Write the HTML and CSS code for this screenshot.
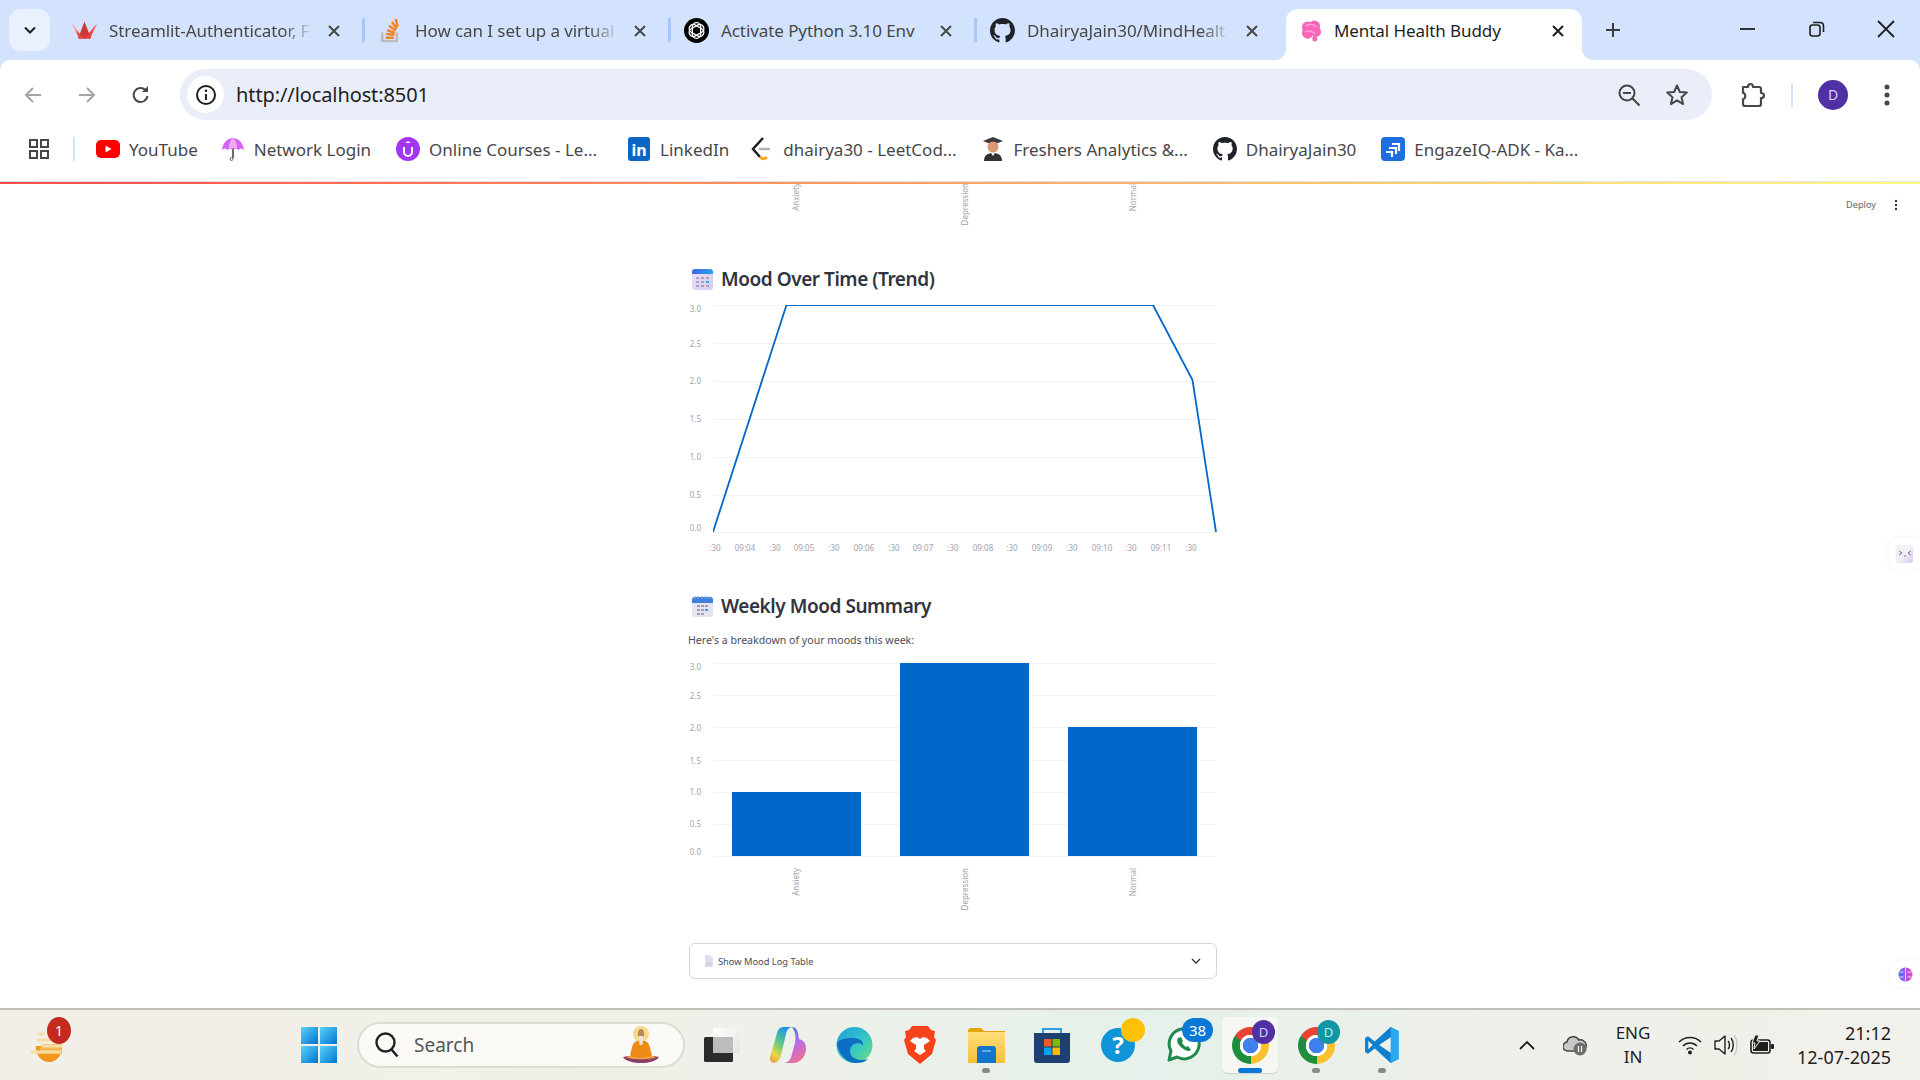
FILE: index.html
```html
<!DOCTYPE html>
<html lang="en">
<head>
  <meta charset="UTF-8">
  <title>Mental Health Buddy</title>
  <link rel="stylesheet" href="styles.css">
</head>
<body>
  <svg class="defs" width="0" height="0">
    <symbol id="github" viewBox="0 0 16 16"><path fill="#1f2328" d="M8 0C3.58 0 0 3.58 0 8c0 3.54 2.29 6.53 5.47 7.59.4.07.55-.17.55-.38 0-.19-.01-.82-.01-1.49-2.01.37-2.53-.49-2.69-.94-.09-.23-.48-.94-.82-1.13-.28-.15-.68-.52-.01-.53.63-.01 1.08.58 1.23.82.72 1.21 1.87.87 2.33.66.07-.52.28-.87.51-1.07-1.78-.2-3.64-.89-3.64-3.95 0-.87.31-1.59.82-2.15-.08-.2-.36-1.02.08-2.12 0 0 .67-.21 2.2.82.64-.18 1.32-.27 2-.27.68 0 1.36.09 2 .27 1.53-1.04 2.2-.82 2.2-.82.44 1.1.16 1.92.08 2.12.51.56.82 1.27.82 2.15 0 3.07-1.87 3.75-3.65 3.95.29.25.54.73.54 1.48 0 1.07-.01 1.93-.01 2.2 0 .21.15.46.55.38A8.013 8.013 0 0016 8c0-4.42-3.58-8-8-8z"/></symbol>
    <symbol id="x" viewBox="0 0 16 16"><path d="M3 3l10 10M13 3L3 13" fill="none" stroke="currentColor" stroke-width="2"/></symbol>
    <linearGradient id="calTop" x1="0" y1="0" x2="1" y2="0"><stop offset="0" stop-color="#3f67dd"/><stop offset="1" stop-color="#2aa2f5"/></linearGradient>
    <linearGradient id="calBody" x1="0" y1="0" x2="1" y2="1"><stop offset="0" stop-color="#ece6f7"/><stop offset="1" stop-color="#d8c8ee"/></linearGradient>
    <linearGradient id="winBlue" x1="0" y1="0" x2="1" y2="1"><stop offset="0" stop-color="#5bd3fb"/><stop offset="1" stop-color="#0073cf"/></linearGradient>
    <linearGradient id="edgeFill" x1="0" y1="0" x2="1" y2="1"><stop offset="0" stop-color="#1f9fe0"/><stop offset=".55" stop-color="#34c6c4"/><stop offset="1" stop-color="#6fe07a"/></linearGradient>
    <linearGradient id="copilotLeft" x1="0.700" y1="0" x2="0.200" y2="1"><stop offset="0" stop-color="#1d8ff0"/><stop offset=".45" stop-color="#5cc88a"/><stop offset=".8" stop-color="#e8d83a"/><stop offset="1" stop-color="#f0a050"/></linearGradient>
    <linearGradient id="copilotRight" x1="0.300" y1="0" x2="0.700" y2="1"><stop offset="0" stop-color="#2f6fe8"/><stop offset=".45" stop-color="#b56de8"/><stop offset="1" stop-color="#f2708f"/></linearGradient>
    <linearGradient id="brainFill" x1="0" y1="0" x2="1" y2="0"><stop offset="0" stop-color="#3a7cf0"/><stop offset=".5" stop-color="#a24ff0"/><stop offset="1" stop-color="#ef4fa6"/></linearGradient>
    <linearGradient id="folderFill" x1="0" y1="0" x2="0" y2="1"><stop offset="0" stop-color="#ffdf7a"/><stop offset="1" stop-color="#f7bf37"/></linearGradient>
    <linearGradient id="taskPane" x1="0" y1="0" x2="1" y2="1"><stop offset="0" stop-color="#fff"/><stop offset="1" stop-color="#e4e3df"/></linearGradient>
  </svg>

  <div class="tabstrip">
    <button class="tab-search"><svg width="16" height="16" viewBox="0 0 16 16"><path d="M3 5.500l5 5 5-5" fill="none" stroke="#1f1f1f" stroke-width="2"/></svg></button>

    <div class="tab">
      <svg class="tab-icon" viewBox="0 0 25 18"><path fill="#ff8e8e" d="M0 2l7 15H12z"/><path fill="#ff4b4b" d="M25 2l-7 15H12z"/><path fill="#c93a3a" d="M12.500 0L6 17h13z"/><path fill="#e9413f" d="M4 9l3 8h11l3-8-8.500 8z"/></svg>
      <span class="tab-title fade">Streamlit-Authenticator, F</span>
      <svg class="tab-close"><use href="#x"/></svg>
    </div>
    <div class="tab">
      <svg class="tab-icon" viewBox="0 0 25 26"><path fill="none" stroke="#bcbbbb" stroke-width="2.500" d="M4 15v9h15v-9"/><path fill="none" stroke="#f48024" stroke-width="2.500" d="M7.500 20.500h8.500M8 16.500l8.500 1M9 12.500l8 3M11 8l7 5M14 4l5 7M18 1l2 8"/></svg>
      <span class="tab-title fade">How can I set up a virtual</span>
      <svg class="tab-close"><use href="#x"/></svg>
    </div>
    <div class="tab">
      <svg class="tab-icon" viewBox="0 0 24 24"><circle cx="12" cy="12" r="12" fill="#000"/><g fill="none" stroke="#fff" stroke-width="1.300"><rect x="8" y="4.500" width="8" height="15" rx="4"/><rect x="8" y="4.500" width="8" height="15" rx="4" transform="rotate(60 12 12)"/><rect x="8" y="4.500" width="8" height="15" rx="4" transform="rotate(120 12 12)"/></g></svg>
      <span class="tab-title">Activate Python 3.10 Env</span>
      <svg class="tab-close"><use href="#x"/></svg>
    </div>
    <div class="tab">
      <svg class="tab-icon"><use href="#github"/></svg>
      <span class="tab-title fade">DhairyaJain30/MindHealt</span>
      <svg class="tab-close"><use href="#x"/></svg>
    </div>
    <div class="tab tab-active">
      <svg class="tab-icon tab-icon-small" viewBox="0 0 22 24"><g fill="#f766b8"><circle cx="7" cy="8" r="6"/><circle cx="14" cy="7" r="6"/><circle cx="16" cy="13" r="5"/><circle cx="7" cy="14" r="6"/><rect x="12" y="17" width="5" height="6" rx="2"/></g><path d="M5 7c3-3 8-3 11 1M4 13c4-2 8-1 11 2" fill="none" stroke="#fda8da" stroke-width="1.500"/></svg>
      <span class="tab-title">Mental Health Buddy</span>
      <svg class="tab-close"><use href="#x"/></svg>
    </div>
    <svg class="new-tab" viewBox="0 0 16 16"><path d="M8 1v14M1 8h14" fill="none" stroke="#3c3c3c" stroke-width="2"/></svg>

    <div class="window-controls">
      <span class="win-btn"><svg width="16" height="16" viewBox="0 0 16 16"><path d="M0 8h15" stroke="#1f1f1f" stroke-width="1.800"/></svg></span>
      <span class="win-btn"><svg width="16" height="16" viewBox="0 0 16 16"><rect x="1" y="4" width="10" height="11" rx="2.500" fill="none" stroke="#1f1f1f" stroke-width="1.600"/><path d="M4 1.500h7c2 0 3.500 1.500 3.500 3.500v6" fill="none" stroke="#1f1f1f" stroke-width="1.600"/></svg></span>
      <span class="win-btn"><svg width="18" height="18" viewBox="0 0 18 18"><path d="M1 1l16 16M17 1L1 17" stroke="#1f1f1f" stroke-width="1.800"/></svg></span>
    </div>
  </div>

  <div class="toolbar">
    <span class="nav-btn"><svg width="20" height="20" viewBox="0 0 20 20"><path d="M18 10H3M10 3l-7 7 7 7" fill="none" stroke="#a4a4a4" stroke-width="2"/></svg></span>
    <span class="nav-btn"><svg width="20" height="20" viewBox="0 0 20 20"><path d="M2 10h15M10 3l7 7-7 7" fill="none" stroke="#a4a4a4" stroke-width="2"/></svg></span>
    <span class="nav-btn"><svg width="20" height="20" viewBox="0 0 20 20"><path d="M16.500 11a7 7 0 1 1-2-6" fill="none" stroke="#474747" stroke-width="2"/><path d="M17 1v6h-6z" fill="#474747"/></svg></span>
    <div class="omnibox">
      <span class="site-info"><svg width="22" height="22" viewBox="0 0 22 22"><circle cx="11" cy="11" r="9" fill="none" stroke="#1f1f1f" stroke-width="2"/><path d="M11 10v6" stroke="#1f1f1f" stroke-width="2"/><circle cx="11" cy="6.800" r="1.300" fill="#1f1f1f"/></svg></span>
      <span class="url">http://localhost:8501</span>
      <svg class="omni-icon omni-zoom" width="24" height="24" viewBox="0 0 24 24"><circle cx="10" cy="10" r="7.500" fill="none" stroke="#474747" stroke-width="2"/><path d="M6 10h8M15.500 15.500l7 7" stroke="#474747" stroke-width="2"/></svg>
      <svg class="omni-icon" width="24" height="24" viewBox="0 0 24 24"><path d="M12 2.500l2.800 6.500 7 .6-5.300 4.600 1.600 6.900-6.100-3.700-6.100 3.700 1.600-6.900L2.200 9.600l7-.6z" fill="none" stroke="#474747" stroke-width="2" stroke-linejoin="round"/></svg>
    </div>
    <svg class="ext-icon" width="24" height="26" viewBox="0 0 24 26"><path d="M2 5h5c0-4 5-4 5 0h6c1 0 2 1 2 2v4c4 0 4 5 0 5v6c0 1-1 2-2 2H4c-1 0-2-1-2-2v-5c3 0 3-6 0-6z" fill="none" stroke="#474747" stroke-width="2.200" stroke-linejoin="round"/></svg>
    <span class="toolbar-sep"></span>
    <span class="avatar">D</span>
    <svg class="menu-dots" width="6" height="24" viewBox="0 0 6 24"><g fill="#474747"><circle cx="3" cy="4" r="2.500"/><circle cx="3" cy="12" r="2.500"/><circle cx="3" cy="20" r="2.500"/></g></svg>
  </div>

  <div class="bookmarks">
    <svg class="apps" width="20" height="20" viewBox="0 0 20 20"><g fill="none" stroke="#474747" stroke-width="2"><rect x="1" y="1" width="7" height="7"/><rect x="12" y="1" width="7" height="7"/><rect x="1" y="12" width="7" height="7"/><rect x="12" y="12" width="7" height="7"/></g></svg>
    <span class="bm-sep"></span>
    <div class="bm bm-first">
      <svg class="bm-icon" viewBox="0 0 24 24"><rect y="3" width="24" height="18" rx="5" fill="#f00"/><path d="M9.500 8.500v7l6-3.500z" fill="#fff"/></svg>
      <span>YouTube</span>
    </div>
    <div class="bm bm-network">
      <svg class="bm-icon" viewBox="0 0 24 24"><path d="M1 13C2 5 7 1 12 1s10 4 11 12c-2-2-4-2-5.500 0-1.500-2-3.500-2-5.500 0-2-2-4-2-5.500 0C5 11 3 11 1 13z" fill="#d565f0"/><path d="M8 11c0-5 2-9 4-10 2 1 4 5 4 10" fill="#f1a8f7"/><path d="M12 12v9" stroke="#6b6b6b" stroke-width="2"/><circle cx="10.500" cy="22" r="1.500" fill="none" stroke="#6b6b6b"/></svg>
      <span>Network Login</span>
    </div>
    <div class="bm">
      <svg class="bm-icon" viewBox="0 0 24 24"><circle cx="12" cy="12" r="12" fill="#a435f0"/><path d="M8 10v5a4 4 0 0 0 8 0v-5" fill="none" stroke="#fff" stroke-width="2"/><path d="M12 4l3 2h-6z" fill="#fff"/></svg>
      <span>Online Courses - Le...</span>
    </div>
    <div class="bm bm-linkedin">
      <span class="linkedin">in</span>
      <span>LinkedIn</span>
    </div>
    <div class="bm bm-leet">
      <svg class="bm-icon" viewBox="0 0 24 24"><path d="M13 1L3 12l7 8" fill="none" stroke="#1f1f1f" stroke-width="2.500"/><path d="M10 20c3 3 5 2 7 0" fill="none" stroke="#ffa116" stroke-width="2.500"/><path d="M9 12h11" stroke="#b3b3b3" stroke-width="2.500"/></svg>
      <span>dhairya30 - LeetCod...</span>
    </div>
    <div class="bm bm-freshers">
      <svg class="bm-icon" viewBox="0 0 24 24"><path d="M12 0L2 4l10 4 10-4z" fill="#3a3a3a"/><circle cx="12" cy="10" r="5.500" fill="#d79a73"/><path d="M3 24c0-6 4-8 9-8s9 2 9 8z" fill="#333"/><path d="M10 16l2 3 2-3z" fill="#fff"/></svg>
      <span>Freshers Analytics &amp;...</span>
    </div>
    <div class="bm">
      <svg class="bm-icon"><use href="#github"/></svg>
      <span>DhairyaJain30</span>
    </div>
    <div class="bm">
      <svg class="bm-icon" viewBox="0 0 24 24"><rect width="24" height="24" rx="4" fill="#1d6fe0"/><g fill="none" stroke="#fff" stroke-width="2.200"><path d="M11 7h7v7"/><path d="M8 11h7v6"/><path d="M5 15h6v5"/></g></svg>
      <span>EngazeIQ-ADK - Ka...</span>
    </div>
  </div>
  <div class="rainbow"></div>

  <main class="page">
    <div class="deploy"><span>Deploy</span><svg width="4" height="12" viewBox="0 0 4 12"><g fill="#31333f"><circle cx="2" cy="2" r="1.200"/><circle cx="2" cy="6" r="1.200"/><circle cx="2" cy="10" r="1.200"/></g></svg></div>

    <div class="column">
      <svg class="cut-axis" width="528" height="42" viewBox="689 869 528 42">
        <g class="axis-label">
          <text transform="translate(799 868) rotate(-90)" text-anchor="end">Anxiety</text>
          <text transform="translate(968 868) rotate(-90)" text-anchor="end">Depression</text>
          <text transform="translate(1136 868) rotate(-90)" text-anchor="end">Normal</text>
        </g>
      </svg>

      <h3 class="heading heading-first">
        <svg width="21" height="21" viewBox="0 0 21 21"><rect width="21" height="21" rx="3" fill="url(#calBody)"/><path d="M3 0h15a3 3 0 0 1 3 3v2H0V3a3 3 0 0 1 3-3z" fill="url(#calTop)"/><g fill="#a8a2c0"><rect x="4" y="8" width="3" height="2"/><rect x="9" y="8" width="3" height="2"/><rect x="14" y="8" width="3" height="2"/><rect x="4" y="12" width="3" height="2"/><rect x="9" y="12" width="3" height="2"/><rect x="14" y="12" width="3" height="2" fill="#2aa2f5"/><rect x="4" y="16" width="3" height="2"/><rect x="9" y="16" width="3" height="2"/><rect x="14" y="16" width="3" height="2"/></g></svg>
        Mood Over Time (Trend)
      </h3>
      <svg class="chart" width="528" height="264" viewBox="689 296 528 264">
        <clipPath id="plotClip"><rect x="713" y="305" width="504" height="230"/></clipPath>
        <g class="grid">
          <path d="M713 305.500H1216M713 343.500H1216M713 381.500H1216M713 419.500H1216M713 457.500H1216M713 495.500H1216M713 532.500H1216"/>
        </g>
        <g class="axis-label" text-anchor="end">
          <text x="701" y="312">3.0</text><text x="701" y="347">2.5</text><text x="701" y="384">2.0</text><text x="701" y="422">1.5</text><text x="701" y="460">1.0</text><text x="701" y="498">0.5</text><text x="701" y="531">0.0</text>
        </g>
        <g class="axis-label" text-anchor="middle">
          <text x="715" y="551">:30</text><text x="745" y="551">09:04</text><text x="775" y="551">:30</text><text x="804" y="551">09:05</text><text x="834" y="551">:30</text><text x="864" y="551">09:06</text><text x="894" y="551">:30</text><text x="923" y="551">09:07</text><text x="953" y="551">:30</text><text x="983" y="551">09:08</text><text x="1012" y="551">:30</text><text x="1042" y="551">09:09</text><text x="1072" y="551">:30</text><text x="1102" y="551">09:10</text><text x="1131" y="551">:30</text><text x="1161" y="551">09:11</text><text x="1191" y="551">:30</text>
        </g>
        <polyline class="trend" clip-path="url(#plotClip)" points="713,532 786.500,305 1153,305 1192.500,380 1216,532"/>
      </svg>

      <h3 class="heading heading-second">
        <svg width="21" height="21" viewBox="0 0 21 21"><rect y="1" width="21" height="20" rx="3" fill="#e6e4f0"/><path d="M3 1h15a3 3 0 0 1 3 3v3H0V4a3 3 0 0 1 3-3z" fill="#3f7fdc"/><path d="M3 0v3M6.500 0v3M10 0v3M13.500 0v3M17 0v3" stroke="#8ab0ec" stroke-width="1"/><g fill="#a19cb8"><rect x="5" y="9" width="3" height="2"/><rect x="9" y="9" width="3" height="2"/><rect x="13" y="9" width="3" height="2"/><rect x="5" y="13" width="3" height="2"/><rect x="9" y="13" width="3" height="2"/><rect x="13" y="13" width="3" height="2" fill="#2aa2f5"/><rect x="5" y="17" width="3" height="2"/><rect x="9" y="17" width="3" height="2"/></g></svg>
        Weekly Mood Summary
      </h3>
      <p class="intro">Here's a breakdown of your moods this week:</p>
      <svg class="chart chart-bars" width="528" height="260" viewBox="689 655 528 260">
        <g class="grid">
          <path d="M713 663.500H1216M713 695.500H1216M713 727.500H1216M713 760.500H1216M713 792.500H1216M713 824.500H1216M713 856.500H1216"/>
        </g>
        <g class="axis-label" text-anchor="end">
          <text x="701" y="670">3.0</text><text x="701" y="699">2.5</text><text x="701" y="731">2.0</text><text x="701" y="764">1.5</text><text x="701" y="795">1.0</text><text x="701" y="827">0.5</text><text x="701" y="855">0.0</text>
        </g>
        <g class="bars">
          <rect x="732" y="792" width="129" height="64"/>
          <rect x="900" y="663" width="129" height="193"/>
          <rect x="1068" y="727" width="129" height="129"/>
        </g>
        <g class="axis-label">
          <text transform="translate(799 868) rotate(-90)" text-anchor="end">Anxiety</text>
          <text transform="translate(968 868) rotate(-90)" text-anchor="end">Depression</text>
          <text transform="translate(1136 868) rotate(-90)" text-anchor="end">Normal</text>
        </g>
      </svg>

      <div class="expander">
        <svg width="8" height="12" viewBox="0 0 8 12"><path d="M0 0h5l3 3v9H0z" fill="#e4dff0"/><path d="M1 8h6M1 10h6" stroke="#c9c3da"/></svg>
        <span class="expander-label">Show Mood Log Table</span>
        <svg class="expander-chevron" width="10" height="8" viewBox="0 0 10 8"><path d="M1 2l4 4 4-4" fill="none" stroke="#31333f" stroke-width="1.300"/></svg>
      </div>
    </div>

    <div class="float-card float-face">
      <span class="face">
        <svg width="14" height="8" viewBox="0 0 14 8"><path d="M1 1l3 2-3 2M13 1l-3 2 3 2M6 6h2" fill="none" stroke="#777" stroke-width="1"/></svg>
      </span>
    </div>
    <div class="float-card float-brain">
      <svg width="15" height="15" viewBox="0 0 15 15"><circle cx="7.500" cy="7.500" r="7" fill="url(#brainFill)"/><path d="M7.500 1v13M1.500 5h4M1.500 10h4M9.500 5h4M9.500 10h4" stroke="#fff" stroke-width=".8"/></svg>
    </div>
  </main>

  <footer class="taskbar">
    <div class="weather">
      <svg width="36" height="30" viewBox="0 0 36 30"><path d="M6 14h26c1 8-5 16-13 16S5 22 6 14z" fill="#f6951c"/><path d="M12 12h20v10H8z" fill="#f8b84e"/><g stroke="#f3dfa5" stroke-width="3"><path d="M8 2h6M7 8h14M12 14h20M1 20h30"/></g></svg>
      <span class="weather-badge">1</span>
    </div>

    <span class="task-slot">
      <svg width="36" height="36" viewBox="0 0 36 36"><g fill="url(#winBlue)"><rect width="17" height="17"/><rect x="19" width="17" height="17"/><rect y="19" width="17" height="17"/><rect x="19" y="19" width="17" height="17"/></g></svg>
    </span>

    <div class="search">
      <svg width="24" height="26" viewBox="0 0 24 26"><circle cx="10.500" cy="10.500" r="9" fill="none" stroke="#222" stroke-width="2.400"/><path d="M16.500 17.500l6 7" stroke="#222" stroke-width="2.600"/></svg>
      <span class="search-label">Search</span>
      <svg class="search-guru" width="36" height="38" viewBox="0 0 36 38"><circle cx="18" cy="8" r="8" fill="#f7d98a"/><path d="M0 31c8-2 28-2 36 0-5 8-31 8-36 0z" fill="#8a3f68"/><path d="M3 31c6-3 24-3 30 0-5 3-25 3-30 0z" fill="#f0a040"/><path d="M14 15c-4 1-5 6-6 11-1 2-1 3 0 4 6 2 14 2 20 0 1-1 1-2 0-4-1-5-2-10-6-11z" fill="#ee8a16"/><ellipse cx="18" cy="8" rx="3.200" ry="5" fill="#b98560"/><path d="M15.500 10h5l-1 9h-3z" fill="#e8e4dc"/></svg>
    </div>

    <span class="task-slot">
      <svg width="36" height="34" viewBox="0 0 36 34"><rect y="9" width="29" height="25" rx="1.500" fill="#2b2b2b"/><rect x="9" width="27" height="25" rx="1.500" fill="url(#taskPane)"/><rect x="9" y="9" width="20" height="16" fill="#bdbcba"/></svg>
    </span>
    <span class="task-slot">
      <svg width="36" height="36" viewBox="0 0 36 36"><path d="M14 0h8c-4 1-5 3-6 7l-5 21c-1 5-4 8-8 8-3-1-4-5-2-9L7 6c1-4 3-6 7-6z" fill="url(#copilotLeft)"/><path d="M22 0c3 0 5 2 6 6l1 6c4 1 7 4 7 9 0 8-5 15-13 15h-9c5-1 7-4 8-9l3-11c1-5 1-11-3-16z" fill="url(#copilotRight)"/></svg>
    </span>
    <span class="task-slot">
      <svg width="37" height="36" viewBox="0 0 37 36"><circle cx="18.500" cy="18" r="18" fill="url(#edgeFill)"/><path d="M1 16C2 26 10 36 20 36c5 0 9-1 12-4-6 2-14 1-17-4-2-4-1-9 3-11 4-2 8-1 9 2 1-5-4-8-10-8C10 11 3 12 1 16z" fill="#0c6dc4"/></svg>
    </span>
    <span class="task-slot">
      <svg width="32" height="38" viewBox="0 0 32 38"><path d="M8 0h16l3 4 4 1-1 6 2 3-4 14-12 10L4 28 0 14l2-3-1-6 4-1z" fill="#f6431c"/><path d="M9 12l4-1 3 2 3-2 4 1 3 3-6 4v4l2 2-6 4-6-4 2-2v-4l-6-4z" fill="#fff"/></svg>
    </span>
    <span class="task-slot">
      <svg width="37" height="36" viewBox="0 0 37 36"><path d="M0 4c0-2 1-3 3-3h10l3 3h21v8H0z" fill="#e7a40a"/><rect y="5" width="37" height="31" fill="url(#folderFill)"/><path d="M9 22c0-2 1-3 3-3h13c2 0 3 1 3 3v14H9z" fill="#1277cc"/><path d="M14 24h9" stroke="#7cc0ee" stroke-width="1.500"/></svg>
    </span>
    <span class="task-slot">
      <svg width="36" height="36" viewBox="0 0 36 36"><path d="M9 8V2h18v6" fill="none" stroke="#2aa2e5" stroke-width="2"/><path d="M0 6h36v27c0 2-1 3-3 3H3c-2 0-3-1-3-3z" fill="#1d3f72"/><rect x="10" y="12" width="7.500" height="7.500" fill="#ef5a27"/><rect x="18.500" y="12" width="7.500" height="7.500" fill="#7eb900"/><rect x="10" y="20.500" width="7.500" height="7.500" fill="#00a3ee"/><rect x="18.500" y="20.500" width="7.500" height="7.500" fill="#ffb900"/></svg>
    </span>
    <span class="task-slot">
      <span class="help-icon">?</span>
      <span class="help-dot"></span>
    </span>
    <span class="task-slot">
      <svg width="36" height="36" viewBox="0 0 36 36"><path d="M3 33l2-9a15 15 0 1 1 6 6z" fill="#fff" stroke="#1f8a4c" stroke-width="3" stroke-linejoin="round"/><path d="M12 11c-2 3 0 7 4 10s7 4 9 2l-3-4-2 1c-2-1-3-3-4-4l1-2-2-4z" fill="#1f8a4c"/></svg>
      <span class="count-badge">38</span>
    </span>
    <span class="task-slot task-slot-active">
      <span class="chrome"></span>
      <span class="profile-badge profile-purple">D</span>
      <span class="active-bar"></span>
    </span>
    <span class="task-slot">
      <span class="chrome"></span>
      <span class="profile-badge profile-teal">D</span>
    </span>
    <span class="task-slot">
      <svg width="36" height="36" viewBox="0 0 100 100"><path fill-rule="evenodd" fill="#0f7fd0" d="M96 11L74 0 30 40 11 26 3 30v40l8 4 19-14 44 40 22-11zM75 28v44L42 50zM12 38l12 12-12 12z"/><path fill="#2aa8f2" d="M74 0l22 11v78l-22 11z"/></svg>
    </span>

    <div class="tray">
      <svg class="tray-chevron" width="16" height="10" viewBox="0 0 16 10"><path d="M1 9l7-7 7 7" fill="none" stroke="#1f1f1f" stroke-width="1.800"/></svg>
      <span class="tray-cloud">
        <svg width="24" height="22" viewBox="0 0 24 22"><path d="M5 17a4.500 4.500 0 0 1-1-9 6.500 6.500 0 0 1 12-2 5 5 0 0 1 3 11z" fill="#c9c8c6" stroke="#444" stroke-width="1.500"/><circle cx="17" cy="15" r="6.500" fill="#6d6d6d"/><path d="M15.500 12v6M18.500 12v6" stroke="#fff" stroke-width="1.200"/></svg>
      </span>
      <span class="tray-lang">ENG<br>IN</span>
      <svg class="tray-wifi" width="24" height="20" viewBox="0 0 24 20"><path d="M1 7c6-6 16-6 22 0M5 11c4-4 10-4 14 0M8.500 14.500c2-2 5-2 7 0" fill="none" stroke="#1f1f1f" stroke-width="1.500"/><circle cx="12" cy="17.500" r="2" fill="#1f1f1f"/></svg>
      <svg class="tray-volume" width="24" height="22" viewBox="0 0 24 22"><path d="M1 7h4l6-5v18l-6-5H1z" fill="none" stroke="#1f1f1f" stroke-width="1.400" stroke-linejoin="round"/><path d="M14 7c2 2 2 6 0 8M17 4c3 4 3 10 0 14" fill="none" stroke="#1f1f1f" stroke-width="1.400"/><path d="M20 1c4 5 4 15 0 20" fill="none" stroke="#c9c8c6" stroke-width="1.400"/></svg>
      <svg class="tray-battery" width="24" height="20" viewBox="0 0 24 20"><rect x="1" y="5" width="19" height="13" rx="2.500" fill="none" stroke="#1f1f1f" stroke-width="1.600"/><rect x="3" y="7" width="15" height="9" fill="#1f1f1f"/><rect x="21" y="9" width="3" height="5" rx="1" fill="#1f1f1f"/><path d="M5 0L2 8h3l-1 6 6-8H7l2-6z" fill="#1f1f1f" stroke="#f2f0ea"/></svg>
      <div class="clock"><span>21:12</span><span>12-07-2025</span></div>
    </div>
  </footer>
</body>
</html>
```

FILE: styles.css
```css
html, body {
  margin: 0;
  padding: 0;
  height: 100%;
  overflow: hidden;
  background: #d3e3fd;
  font-family: "Noto Sans", "Open Sans", sans-serif;
}

body {
  display: flex;
  flex-direction: column;
  height: 1080px;
}

.defs {
  position: absolute;
}

/* tab strip */
.tabstrip {
  display: flex;
  height: 60px;
  flex: none;
  background: #d3e3fd;
}

.tab-search {
  width: 41px;
  height: 42px;
  margin: 9px 8px 0 9px;
  padding: 0;
  border: 0;
  border-radius: 12px;
  background: #eaf1fe;
  display: flex;
  align-items: center;
  justify-content: center;
}

.tab {
  position: relative;
  width: 306px;
  box-sizing: border-box;
  height: 51px;
  margin-top: 9px;
  padding: 0 22px 8px 14px;
  display: flex;
  align-items: center;
  gap: 12px;
  flex: none;
  color: #474747;
  font-size: 17px;
  letter-spacing: -0.08px;
}

.tab::after {
  content: "";
  position: absolute;
  right: -1px;
  top: 9px;
  width: 3px;
  height: 24px;
  background: #a8c7fa;
}

.tab:nth-of-type(4)::after {
  display: none;
}

.tab-icon {
  width: 25px;
  height: 25px;
  flex: none;
}

.tab-icon-small {
  width: 21px;
  height: 24px;
}

.tab-title {
  flex: 1;
  white-space: nowrap;
}

.fade {
  -webkit-mask-image: linear-gradient(to right, #000 85%, transparent);
  mask-image: linear-gradient(to right, #000 85%, transparent);
}

.tab-close {
  width: 16px;
  height: 16px;
  flex: none;
  color: #474747;
}

.tab-active {
  width: 296px;
  margin-left: 4px;
  padding: 0 16px 8px 15px;
  background: #fff;
  border-radius: 12px 12px 0 0;
  color: #1f1f1f;
}

.tab-active::before,
.tab-active::after {
  content: "";
  position: absolute;
  bottom: 0;
  top: auto;
  width: 12px;
  height: 12px;
}

.tab-active::before {
  left: -12px;
  background: radial-gradient(circle at 0 0, #d3e3fd 12px, #fff 12.5px);
}

.tab-active::after {
  right: -12px;
  background: radial-gradient(circle at 100% 0, #d3e3fd 12px, #fff 12.5px);
}

.tab-active .tab-close {
  color: #1f1f1f;
}

.new-tab {
  width: 16px;
  height: 16px;
  margin: 22px 0 0 23px;
}

.window-controls {
  margin-left: auto;
  display: flex;
}

.win-btn {
  width: 69px;
  height: 60px;
  padding-bottom: 2px;
  box-sizing: border-box;
  display: flex;
  align-items: center;
  justify-content: center;
}

/* toolbar */
.toolbar {
  display: flex;
  align-items: center;
  flex: none;
  box-sizing: border-box;
  height: 60px;
  padding: 9px 0 0 6px;
  background: #fff;
  border-radius: 10px 10px 0 0;
}

.nav-btn {
  width: 54px;
  display: flex;
  justify-content: center;
}

.omnibox {
  width: 1532px;
  height: 51px;
  margin: 0 0 0 12px;
  box-sizing: border-box;
  padding: 0 23px 0 7px;
  border-radius: 26px;
  background: #e9eef8;
  display: flex;
  align-items: center;
}

.site-info {
  width: 37px;
  height: 37px;
  border-radius: 50%;
  background: #fff;
  display: flex;
  align-items: center;
  justify-content: center;
  flex: none;
}

.url {
  margin-left: 12px;
  font-size: 20px;
  letter-spacing: -0.1px;
  color: #1f1f1f;
}

.omni-zoom {
  margin-left: auto;
  margin-right: 24px;
}

.ext-icon {
  margin-left: 29px;
}

.toolbar-sep {
  width: 2px;
  height: 24px;
  margin-left: 26px;
  background: #d3e3fd;
}

.avatar {
  width: 30px;
  height: 30px;
  margin-left: 25px;
  border-radius: 50%;
  background: #5030a5;
  color: #d8d0f0;
  font-size: 14px;
  display: flex;
  align-items: center;
  justify-content: center;
}

.menu-dots {
  margin-left: 36px;
}

/* bookmarks */
.bookmarks {
  display: flex;
  align-items: center;
  flex: none;
  box-sizing: border-box;
  height: 62px;
  padding: 0 0 3px 29px;
  background: #fff;
  border-bottom: 1px solid #e3e3e3;
  color: #474747;
  font-size: 17px;
}

.bm-sep {
  width: 2px;
  height: 24px;
  margin-left: 24px;
  background: #d3e3fd;
}

.bm {
  display: flex;
  align-items: center;
  gap: 9px;
  margin-left: 25px;
  white-space: nowrap;
}

.bm-first {
  margin-left: 21px;
}

.bm-network {
  margin-left: 23px;
}

.bm-linkedin {
  margin-left: 31px;
  gap: 10px;
}

.bm-leet {
  margin-left: 21px;
}

.bm-freshers {
  margin-left: 24px;
}

.bm-icon {
  width: 24px;
  height: 24px;
  flex: none;
}

.linkedin {
  width: 22px;
  height: 24px;
  flex: none;
  border-radius: 3px;
  background: #0a66c2;
  color: #fff;
  font-weight: 700;
  font-size: 16px;
  line-height: 26px;
  text-align: center;
}

.rainbow {
  flex: none;
  height: 2px;
  background: linear-gradient(to right, #ff4b4b, #fffd80);
}

/* page */
.page {
  position: relative;
  flex: 1;
  min-height: 0;
  overflow: hidden;
  padding-right: 14px;
  background: #fff;
  color: #31333f;
  display: flex;
  justify-content: center;
}

.column {
  width: 528px;
}

.cut-axis,
.chart {
  display: block;
}

.axis-label {
  font-size: 8px;
  fill: #9fa2b0;
}

.heading {
  margin: 0;
  height: 24px;
  display: flex;
  align-items: center;
  gap: 8px;
  padding-left: 3px;
  font-size: 19px;
  font-weight: 600;
  letter-spacing: -0.45px;
  white-space: nowrap;
}

.heading-first {
  margin: 41px 0 5px;
}

.heading-second {
  margin-top: 34px;
}

.intro {
  margin: 13px 0 6px -1px;
  height: 18px;
  line-height: 18px;
  font-size: 10.600px;
  color: #4a4c59;
}

.grid path {
  fill: none;
  stroke: #f0f2f6;
  stroke-width: 1;
}

.trend {
  fill: none;
  stroke: #0068c9;
  stroke-width: 1.800;
}

.bars rect {
  fill: #0068c9;
}

.expander {
  margin-top: 28px;
  height: 36px;
  box-sizing: border-box;
  border: 1px solid #d5d6da;
  border-radius: 6px;
  display: flex;
  align-items: center;
  padding: 0 15px;
  gap: 5px;
}

.expander-label {
  font-size: 9.300px;
  color: #4a4c59;
}

.expander-chevron {
  margin-left: auto;
}

.deploy {
  position: absolute;
  top: 14px;
  right: 22px;
  display: flex;
  align-items: center;
  gap: 18px;
  font-size: 9.200px;
  color: #62646f;
}

.float-card {
  position: absolute;
  right: 0;
  background: #fff;
  box-shadow: 0 0 6px rgba(0, 0, 0, 0.05);
  border-radius: 8px 0 0 8px;
  display: flex;
  align-items: center;
}

.float-face {
  top: 354px;
  width: 31px;
  height: 31px;
  padding-left: 7px;
  box-sizing: border-box;
}

.face {
  width: 17px;
  height: 18px;
  border-radius: 3px;
  background: linear-gradient(135deg, #f2f0f6 50%, #dcc6f0);
  display: flex;
  align-items: center;
  justify-content: center;
}

.float-brain {
  top: 777px;
  width: 30px;
  height: 26px;
  padding-left: 8px;
  box-sizing: border-box;
  border-radius: 13px 0 0 13px;
}

/* taskbar */
.taskbar {
  flex: none;
  position: relative;
  height: 72px;
  box-sizing: border-box;
  border-top: 2px solid #c0bfb8;
  background: linear-gradient(to right, #f2efe8, #f0f0e9 35%, #e5f1ea 60%, #eef0e9 78%, #f2f0ea);
  display: flex;
  align-items: center;
}

.weather {
  position: relative;
  width: 36px;
  height: 30px;
  margin: 4px 220px 0 30px;
}

.weather-badge {
  position: absolute;
  left: 17px;
  top: -15px;
  width: 24px;
  height: 27px;
  border-radius: 50%;
  background: #c42b1c;
  color: #fff;
  font-size: 14px;
  text-align: center;
  line-height: 27px;
}

.task-slot {
  position: relative;
  width: 66px;
  height: 56px;
  flex: none;
  display: flex;
  align-items: center;
  justify-content: center;
}

.search {
  width: 328px;
  height: 46px;
  box-sizing: border-box;
  margin: 0 4px 0 5px;
  padding: 0 24px 0 16px;
  border: 2px solid #dcdcd2;
  border-radius: 24px;
  background: #fbfaf7;
  display: flex;
  align-items: center;
  flex: none;
}

.search-label {
  margin-left: 15px;
  font-size: 19px;
  color: #555;
}

.search-guru {
  margin-left: auto;
}

.help-icon {
  width: 34px;
  height: 34px;
  border-radius: 50%;
  background: #0f94d8;
  color: #fff;
  font-weight: 700;
  font-size: 24px;
  line-height: 34px;
  text-align: center;
}

.help-dot {
  position: absolute;
  left: 36px;
  top: 1px;
  width: 24px;
  height: 24px;
  border-radius: 50%;
  background: #ffc107;
}

.count-badge {
  position: absolute;
  left: 31px;
  top: 1px;
  width: 31px;
  height: 24px;
  border-radius: 12px;
  background: #0a78d6;
  color: #fff;
  font-size: 15px;
  line-height: 24px;
  text-align: center;
}

.task-slot-active {
  background: #f6f6f3;
  box-shadow: 0 1px 1px rgba(0, 0, 0, 0.12);
  border-radius: 5px;
  width: 56px;
  margin: 0 5px;
}

.chrome {
  width: 37px;
  height: 37px;
  border-radius: 50%;
  background:
    radial-gradient(circle, #3f7fee 0 7.500px, #fff 8px 10.500px, transparent 11px),
    conic-gradient(from 300deg, #ea4335 0 120deg, #fbc02d 120deg 240deg, #1e8e3e 240deg 360deg);
}

.profile-badge {
  position: absolute;
  top: 3px;
  left: 30px;
  width: 23px;
  height: 24px;
  border-radius: 50%;
  color: #d8d0f0;
  font-size: 13px;
  line-height: 24px;
  text-align: center;
}

.profile-purple {
  background: #5030a5;
}

.profile-teal {
  left: 34px;
  background: #0f97a3;
  color: #c0ecf0;
}

.active-bar {
  position: absolute;
  left: 16px;
  bottom: 0;
  width: 24px;
  height: 5px;
  border-radius: 3px;
  background: #0a78d6;
}

.task-slot:nth-of-type(6)::after,
.task-slot:nth-of-type(11)::after,
.task-slot:nth-of-type(12)::after {
  content: "";
  position: absolute;
  left: 29px;
  bottom: 0;
  width: 8px;
  height: 5px;
  border-radius: 3px;
  background: #8a8a86;
}

.tray {
  margin-left: auto;
  padding-right: 29px;
  display: flex;
  align-items: center;
  color: #1f1f1f;
}

.tray-cloud {
  margin-left: 28px;
  height: 22px;
}

.tray-lang {
  width: 36px;
  margin-left: 28px;
  font-size: 17px;
  line-height: 24px;
  text-align: center;
}

.tray-wifi {
  margin-left: 27px;
}

.tray-volume,
.tray-battery {
  margin-left: 12px;
}

.clock {
  margin-left: 23px;
  display: flex;
  flex-direction: column;
  align-items: flex-end;
  font-size: 18px;
  line-height: 24px;
  white-space: nowrap;
}
```
